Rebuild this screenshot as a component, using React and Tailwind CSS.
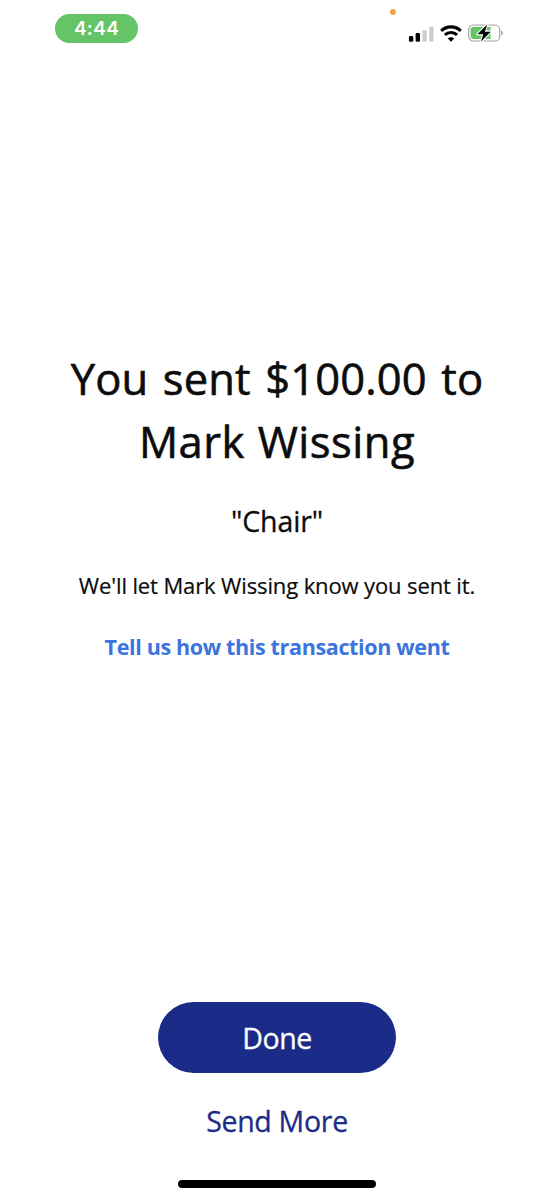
function SignalIcon() {
  return (
    <svg className="h-[18px] w-[26px]" viewBox="0 0 26 18">
      <rect x="0.9" y="12" width="4.4" height="5.8" rx="1.4" fill="#000" />
      <rect x="7.6" y="9" width="4.4" height="8.8" rx="1.4" fill="#000" />
      <rect x="14.4" y="6" width="4.4" height="11.8" rx="1.4" fill="#cdcdcd" />
      <rect x="21.2" y="2.4" width="4.4" height="15.4" rx="1.4" fill="#cdcdcd" />
    </svg>
  );
}

function WifiIcon() {
  return (
    <svg className="h-[17px] w-[22px]" viewBox="0 0 22 17">
      <path d="M1.2 5.9a14 14 0 0 1 19.6 0" fill="none" stroke="#000" strokeWidth="3.1" />
      <path d="M4.9 9.9a8.8 8.8 0 0 1 12.2 0" fill="none" stroke="#000" strokeWidth="3" />
      <path d="M11 16.8 7.8 13.6a4.6 4.6 0 0 1 6.4 0Z" fill="#000" />
    </svg>
  );
}

function BatteryIcon() {
  return (
    <svg className="h-[20px] w-[36px]" viewBox="0 0 36 20">
      <rect x="0.7" y="2" width="31" height="16" rx="4.6" fill="#fff" stroke="#a3a3a3" strokeWidth="1.2" />
      <path d="M5.6 4H22.5V16H5.6Q2.6 16 2.6 13V7Q2.6 4 5.6 4Z" fill="#65c466" />
      <path d="M33.2 7.4q1.8.7 1.8 2.6t-1.8 2.6Z" fill="#a3a3a3" />
      <path
        d="M19.3 1.5 9.3 11.3h6L12.9 18.5 22.9 8.7h-6Z"
        fill="#000"
        stroke="#fff"
        strokeWidth="2.2"
        strokeLinejoin="round"
        paintOrder="stroke"
      />
    </svg>
  );
}

export default function App() {
  return (
    <main className="flex h-[1200px] w-[554px] flex-col overflow-hidden bg-white font-['Open_Sans',sans-serif] text-[#0c0c0d]">
      <header className="relative flex h-[347px] items-start justify-between pl-[55px] pr-[50px]">
        <div className="mt-[14px] flex h-[29px] w-[83px] items-center justify-center rounded-full bg-[#65c466] pt-[2px] font-['Inter',sans-serif] text-[19px] font-semibold tracking-[0.3px] text-white">
          4:44
        </div>
        <span className="absolute left-[390px] top-[9px] size-[6px] rounded-full bg-[#f3a046]" />
        <div className="mt-[23px] flex items-center gap-[6px]">
          <SignalIcon />
          <WifiIcon />
          <BatteryIcon />
        </div>
      </header>

      <section className="flex flex-col items-center whitespace-nowrap text-center">
        <h1 className="text-[43.5px] leading-[63px] [-webkit-text-stroke:0.6px_#0c0c0d]">
          <span className="block tracking-[0.15px] [word-spacing:3px]">You sent $100.00 to</span>
          <span className="block tracking-[0.5px] [word-spacing:1px]">Mark Wissing</span>
        </h1>
        <p className="mt-[28px] text-[28.5px] leading-[40px] tracking-[-0.1px] [-webkit-text-stroke:0.3px_#0c0c0d]">"Chair"</p>
        <p className="mt-[29px] text-[22px] leading-[30px] tracking-[-0.12px] [-webkit-text-stroke:0.2px_#0c0c0d]">
          We'll let Mark Wissing know you sent it.
        </p>
        <a className="mt-[32px] text-[21.5px] font-bold leading-[30px] tracking-[-0.35px] text-[#3b74de]">
          Tell us how this transaction went
        </a>
      </section>

      <footer className="mt-auto flex flex-col items-center pb-[12px]">
        <button className="h-[71px] w-[238px] rounded-full bg-[#1b2c88] pt-[2px] text-[28.5px] tracking-[-0.4px] text-white [-webkit-text-stroke:0.3px_#fff]">
          Done
        </button>
        <button className="mt-[28px] text-[28.5px] leading-[40px] tracking-[-0.3px] text-[#1b2c88] [-webkit-text-stroke:0.3px_#1b2c88]">
          Send More
        </button>
        <div className="mt-[39px] h-[8px] w-[198px] rounded-full bg-black" />
      </footer>
    </main>
  );
}
